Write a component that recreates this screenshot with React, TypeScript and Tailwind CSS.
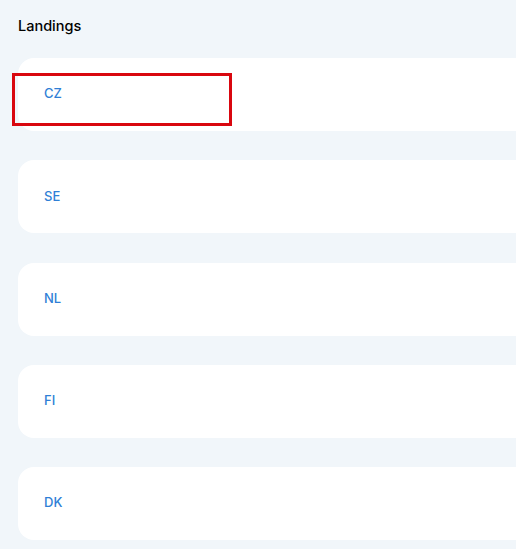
const landings = ["CZ", "SE", "NL", "FI", "DK"];

export default function App() {
  return (
    <div className="min-h-screen w-[516px] h-[549px] overflow-hidden bg-[#f1f6fa] pl-[18px] pt-[16px] font-['Inter',sans-serif]">
      <h1 className="text-[14.5px] leading-[20px] font-medium text-black">Landings</h1>

      <div className="mt-[22px] flex flex-col gap-[29.3px]">
        {landings.map((code, i) => (
          <div
            key={code}
            className="relative -mr-6 h-[73px] rounded-l-[16px] bg-white flex items-center pl-[26px]"
          >
            <span className="text-[13px] font-medium text-[#2f7fd6] -mt-[1px]">{code}</span>
            {i === 0 && (
              <div className="absolute left-[-6px] top-[15px] w-[220px] h-[53px] border-[3px] border-[#d9070f] pointer-events-none" />
            )}
          </div>
        ))}
      </div>
    </div>
  );
}
